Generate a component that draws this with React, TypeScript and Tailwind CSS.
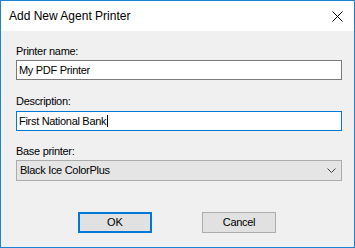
import React from "react";

export default function App() {
  const label = "h-[13px] leading-[13px] text-[11px] text-black tracking-[-0.3px]";
  return (
    <div
      className="w-[355px] h-[248px] border border-[#1883d7] flex flex-col bg-white"
      style={{ fontFamily: '"Liberation Sans", Arial, sans-serif' }}
    >
      <div className="h-[30px] flex items-center justify-between bg-white pl-[8px] pr-[10px]">
        <span className="text-[12px] text-black leading-none">Add New Agent Printer</span>
        <svg width="11" height="11" viewBox="0 0 11 11" className="mr-[1px]">
          <path d="M0.5 0.5 L10.5 10.5 M10.5 0.5 L0.5 10.5" stroke="#000" strokeWidth="1" />
        </svg>
      </div>
      <div className="flex-1 bg-[#f0f0f0] pl-[15px] pt-[14px] flex flex-col">
        <div className={label}>Printer name:</div>
        <div className="mt-[2px] w-[326px] h-[20px] border border-[#7a7a7a] bg-white flex items-center pl-[2px]">
          <span className="text-[11px] tracking-[-0.3px] text-black">My PDF Printer</span>
        </div>
        <div className={`${label} mt-[15px]`}>Description:</div>
        <div className="mt-[3px] w-[326px] h-[20px] border border-[#0078d7] bg-white flex items-center pl-[2px]">
          <span className="text-[11px] tracking-[-0.3px] text-black">First National Bank</span>
          <span className="w-px h-[12px] bg-black ml-[1px]" />
        </div>
        <div className={`${label} mt-[14px]`}>Base printer:</div>
        <div className="mt-[2px] w-[326px] h-[21px] border border-[#acacac] bg-[#e5e5e5] flex items-center justify-between pl-[3px] pr-[5px]">
          <span className="text-[11px] tracking-[-0.3px] text-black">Black Ice ColorPlus</span>
          <svg width="9" height="5" viewBox="0 0 9 5">
            <path d="M0.5 0.5 L4.5 4.5 L8.5 0.5" stroke="#404040" strokeWidth="1" fill="none" />
          </svg>
        </div>
        <div className="mt-[31px] flex pl-[62px] gap-[50px]">
          <div className="w-[74px] h-[21px] border-2 border-[#0078d7] bg-[#e1e1e1] flex items-center justify-center text-[11px] text-black">
            OK
          </div>
          <div className="w-[74px] h-[21px] border border-[#adadad] bg-[#e1e1e1] flex items-center justify-center text-[11px] text-black tracking-[-0.3px]">
            Cancel
          </div>
        </div>
      </div>
    </div>
  );
}
